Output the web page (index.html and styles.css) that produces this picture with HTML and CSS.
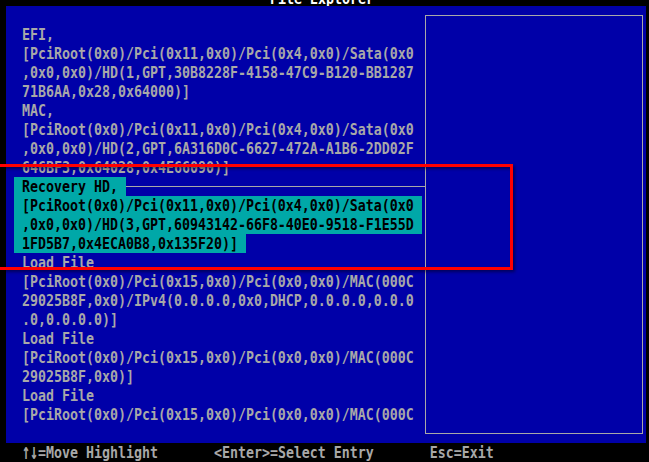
FILE: index.html
```html
<!DOCTYPE html>
<html lang="en">
<head>
    <meta charset="UTF-8">
    <meta name="viewport" content="width=device-width, initial-scale=1.0">
    <title>File Explorer</title>
    <link rel="stylesheet" href="styles.css">
</head>
<body>

    <div class="screen">
        <div class="title"><div class="title-text"><span class="t">File Explorer</span></div></div>

        <div class="main">
            <!-- boot entries -->
            <div class="list">
                <div class="row"><span class="cell"><span class="t">EFI,</span></span></div>
                <div class="row"><span class="cell"><span class="t">[PciRoot(0x0)/Pci(0x11,0x0)/Pci(0x4,0x0)/Sata(0x0</span></span></div>
                <div class="row"><span class="cell"><span class="t">,0x0,0x0)/HD(1,GPT,30B8228F-4158-47C9-B120-BB1287</span></span></div>
                <div class="row"><span class="cell"><span class="t">71B6AA,0x28,0x64000)]</span></span></div>
                <div class="row"><span class="cell"><span class="t">MAC,</span></span></div>
                <div class="row"><span class="cell"><span class="t">[PciRoot(0x0)/Pci(0x11,0x0)/Pci(0x4,0x0)/Sata(0x0</span></span></div>
                <div class="row"><span class="cell"><span class="t">,0x0,0x0)/HD(2,GPT,6A316D0C-6627-472A-A1B6-2DD02F</span></span></div>
                <div class="row"><span class="cell"><span class="t">646BF3,0x64028,0x4E66090)]</span></span></div>
                <div class="row selected">
                    <span class="cell"><span class="t">Recovery HD,</span></span>
                    <span class="rule"></span>
                </div>
                <div class="row selected"><span class="cell"><span class="t">[PciRoot(0x0)/Pci(0x11,0x0)/Pci(0x4,0x0)/Sata(0x0</span></span></div>
                <div class="row selected"><span class="cell"><span class="t">,0x0,0x0)/HD(3,GPT,60943142-66F8-40E0-9518-F1E55D</span></span></div>
                <div class="row selected"><span class="cell"><span class="t">1FD5B7,0x4ECA0B8,0x135F20)]</span></span></div>
                <div class="row"><span class="cell"><span class="t">Load File</span></span></div>
                <div class="row"><span class="cell"><span class="t">[PciRoot(0x0)/Pci(0x15,0x0)/Pci(0x0,0x0)/MAC(000C</span></span></div>
                <div class="row"><span class="cell"><span class="t">29025B8F,0x0)/IPv4(0.0.0.0,0x0,DHCP,0.0.0.0,0.0.0</span></span></div>
                <div class="row"><span class="cell"><span class="t">.0,0.0.0.0)]</span></span></div>
                <div class="row"><span class="cell"><span class="t">Load File</span></span></div>
                <div class="row"><span class="cell"><span class="t">[PciRoot(0x0)/Pci(0x15,0x0)/Pci(0x0,0x0)/MAC(000C</span></span></div>
                <div class="row"><span class="cell"><span class="t">29025B8F,0x0)]</span></span></div>
                <div class="row"><span class="cell"><span class="t">Load File</span></span></div>
                <div class="row"><span class="cell"><span class="t">[PciRoot(0x0)/Pci(0x15,0x0)/Pci(0x0,0x0)/MAC(000C</span></span></div>
            </div>

            <!-- help panel -->
            <div class="side"><div class="help-box"></div></div>
        </div>

        <div class="footer"><span class="t">  <span class="arrows">↑↓</span>=Move Highlight       &lt;Enter&gt;=Select Entry       Esc=Exit</span></div>
    </div>

    <!-- red annotation frame -->
    <div class="mark"></div>

</body>
</html>
```

FILE: styles.css
```css
body {
    margin: 0;
    background: #000;
    font-family: "DejaVu Sans Mono", "Liberation Mono", monospace;
    font-size: 13.29px;
    font-weight: bold;
    color: #a8a8a8;
    overflow: hidden;
}
.screen {
    width: 640px;
    margin-left: 6px;
    display: flex;
    flex-direction: column;
}
/* stretch glyphs to the tall 8x19 text-mode cell */
.t {
    display: inline-block;
    white-space: pre;
    transform: scaleY(1.25);
}
.arrows {
    display: inline-block;
    transform: translateY(-1px) scaleY(1.35);
}
.title {
    height: 6px;
    overflow: hidden;
}
.title-text {
    margin-top: -11px;
    line-height: 19px;
    padding-left: 264px;
    color: #fff;
}
.main {
    display: flex;
    height: 437px;
    background: #0000a8;
}
.list {
    width: 419px;
    padding: 19px 0 0 8px;
    box-sizing: border-box;
}
.row {
    display: flex;
    height: 19px;
    line-height: 19px;
}
.cell {
    padding: 0 8px;
}
.selected .cell {
    background: #00a8a8;
    color: #000;
}
.rule {
    flex: 1;
    height: 0;
    margin-top: 9px;
    border-top: 1px solid #a8a8a8;
}
.side {
    flex: 1;
    display: flex;
    padding: 9px 3px 9px 0;
}
.help-box {
    flex: 1;
    border: 1px solid #a8a8a8;
}
.footer {
    height: 19px;
    line-height: 19px;
}
.mark {
    position: absolute;
    left: -10px;
    top: 164px;
    width: 523px;
    height: 106px;
    box-sizing: border-box;
    border: 3px solid #ff0000;
    box-shadow: 2px 2px 3px rgba(0, 0, 0, 0.45), inset 2px 2px 3px rgba(0, 0, 0, 0.45);
}
```
